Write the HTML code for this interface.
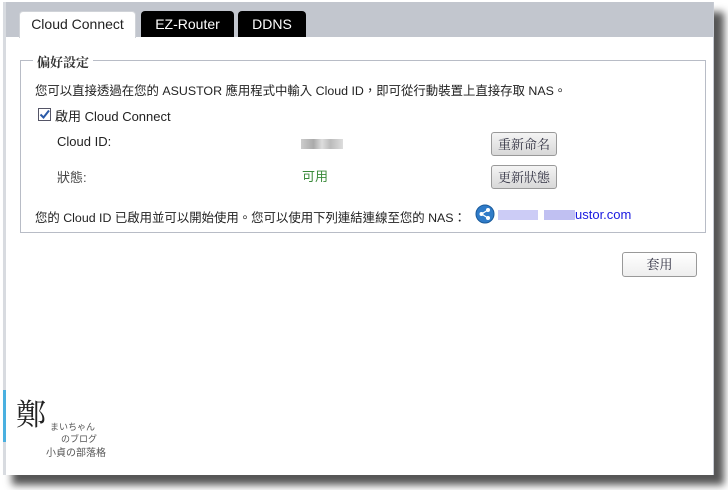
<!DOCTYPE html>
<html><head><meta charset="utf-8"><style>
*{margin:0;padding:0;box-sizing:border-box}
body{width:728px;height:490px;background:#fff;position:relative;overflow:hidden;font-family:"Liberation Sans","Noto Sans CJK TC",sans-serif;font-size:13px;color:#222}
.shadow{position:absolute;left:12px;top:12px;width:712px;height:473px;background:#555;filter:blur(4px)}
.page{position:absolute;left:3px;top:2px;width:711px;height:473px;background:#fff;border-left:3px solid #d8dbe0;border-right:1px solid #c8ccd4}
.band{position:absolute;left:0;top:0;right:0;height:35px;background:#c2c6ce}
.tab{position:absolute;top:9px;height:26px;border-radius:4px 4px 0 0;font-size:14px;text-align:center;line-height:26px}
.t1{left:13px;width:117px;background:#fff;color:#222;border:1px solid #d0d3d8;border-bottom:none;height:27px;line-height:25px}
.t2{left:135px;width:93px;background:#000;color:#fff}
.t3{left:232px;width:68px;background:#000;color:#fff}
.fs{position:absolute;left:14px;top:58px;width:686px;height:173px;border:1px solid #b8bcc6}
.leg{position:absolute;left:12px;top:-9px;background:#fff;padding:0 4px;font-size:13px;color:#333;font-weight:bold;font-family:"Noto Serif CJK SC",serif}
.t{position:absolute;white-space:nowrap}
.sm{font-size:12.4px}
.btn{position:absolute;width:66px;height:24px;border:1px solid #999;border-radius:3px;background:linear-gradient(#f4f4f4,#d8d8d8);font-size:13px;text-align:center;line-height:22px;color:#334;font-family:"Noto Serif CJK SC",serif}
.cb{position:absolute;left:17px;top:47px;width:13px;height:13px;border:1px solid #556;background:#fff}
.blur{position:absolute;height:10px}
</style></head><body>
<div class="shadow"></div>
<div class="page">
<div class="band"></div>
<div class="tab t1">Cloud Connect</div>
<div class="tab t2">EZ-Router</div>
<div class="tab t3">DDNS</div>
<div class="fs">
<div class="leg">偏好設定</div>
<div class="t sm" style="left:14px;top:20px">您可以直接透過在您的 ASUSTOR 應用程式中輸入 Cloud ID，即可從行動裝置上直接存取 NAS。</div>
<div class="cb"><svg width="13" height="13" viewBox="0 0 13 13" style="position:absolute;left:-1px;top:-1px"><path d="M2.5 6.5 L5.5 9.5 L11 2.5" stroke="#2a5aa8" stroke-width="2" fill="none"/></svg></div>
<div class="t" style="left:34px;top:45px">啟用 Cloud Connect</div>
<div class="t" style="left:36px;top:73px">Cloud ID:</div>
<div class="blur" style="left:280px;top:78px;width:42px;background:linear-gradient(90deg,#ccc,#aaa 30%,#ddd 50%,#bbb 70%,#ddd)"></div>
<div class="t" style="left:36px;top:106px;color:#444">狀態:</div>
<div class="t" style="left:281px;top:105px;color:#3a8a3a">可用</div>
<div class="btn" style="left:470px;top:71px">重新命名</div>
<div class="btn" style="left:470px;top:104px">更新狀態</div>
<div class="t sm" style="left:14px;top:147px">您的 Cloud ID 已啟用並可以開始使用。您可以使用下列連結連線至您的 NAS：</div>
<svg style="position:absolute;left:454px;top:143px" width="20" height="20" viewBox="0 0 20 20"><circle cx="10" cy="10" r="9" fill="#2f7bc8" stroke="#1a5a9a"/><circle cx="6.5" cy="10" r="2" fill="#fff"/><circle cx="13" cy="6" r="2" fill="#fff"/><circle cx="13" cy="14" r="2" fill="#fff"/><path d="M6.5 10L13 6M6.5 10L13 14" stroke="#fff" stroke-width="1.3"/></svg>
<div class="blur" style="left:477px;top:149px;width:40px;background:#ccccf6"></div>
<div class="blur" style="left:523px;top:149px;width:31px;background:#c0c0f2"></div>
<div class="t" style="left:554px;top:146px;color:#1a1ae0">ustor.com</div>
</div>
<div class="btn" style="left:616px;top:250px;width:75px;height:25px;background:linear-gradient(#fff,#eee)">套用</div>
<div style="position:absolute;left:-3px;top:388px;width:3px;height:52px;background:#4ab0e0"></div>
<div class="t" style="left:10px;top:388px;font-size:30px;color:#222;font-family:'Noto Serif CJK SC',serif">鄭</div>
<div class="t" style="left:44px;top:418px;font-size:9px;color:#555">まいちゃん</div>
<div class="t" style="left:55px;top:430px;font-size:9px;color:#555">のブログ</div>
<div class="t" style="left:40px;top:442px;font-size:10px;color:#555">小貞の部落格</div>
</div>
</body></html>
